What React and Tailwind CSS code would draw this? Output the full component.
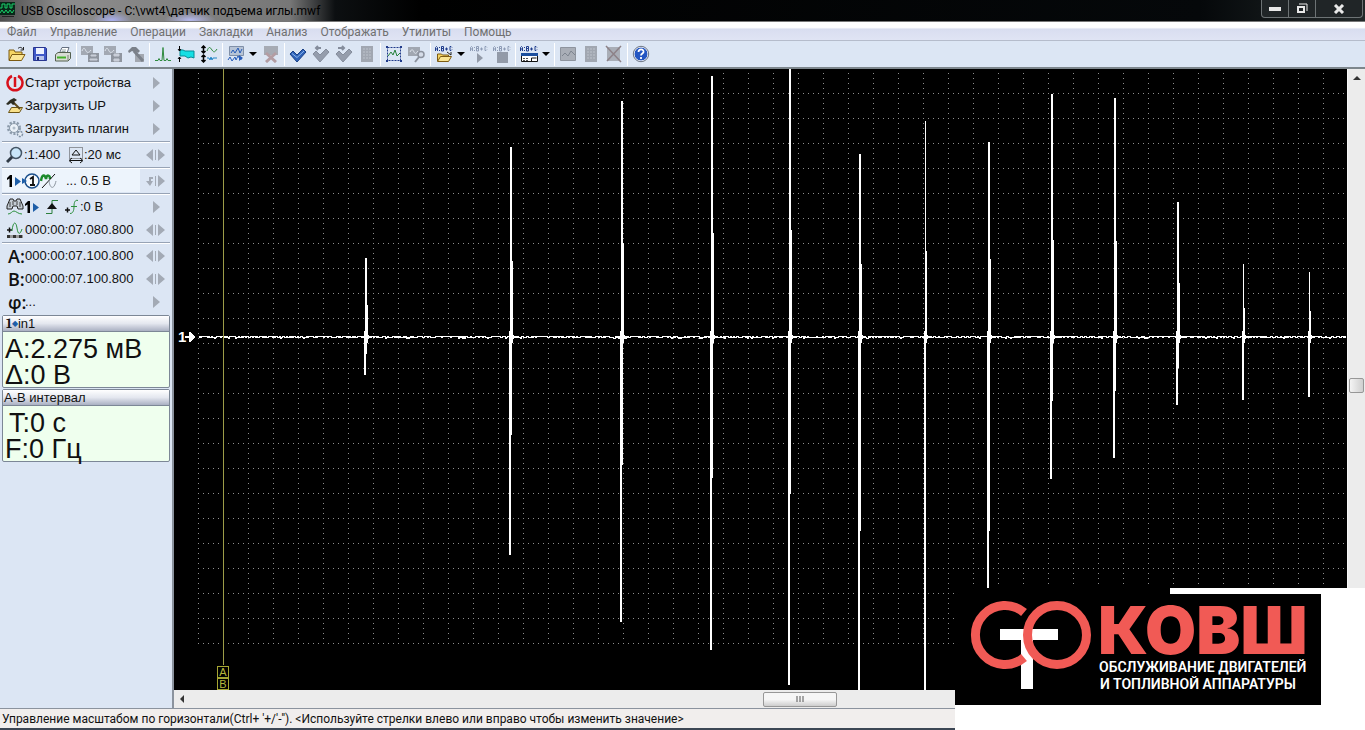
import React from "react";

const menuItems = ["Файл", "Управление", "Операции", "Закладки", "Анализ", "Отображать", "Утилиты", "Помощь"];

// x, top, bottom and line width of every pulse in the trace area
const pulses = [
  [192, 189, 306, 2],
  [337, 78, 486, 2],
  [448, 32, 553, 2],
  [538, 7, 581, 2],
  [616, 0, 616, 2],
  [686, 85, 700, 2],
  [752, 52, 700, 1],
  [815, 73, 700, 2],
  [878, 25, 410, 2],
  [941, 29, 389, 2],
  [1004, 133, 336, 2],
  [1070, 195, 331, 1],
  [1136, 203, 328, 1],
];

const BASE = 268;

const noisePath = () => {
  let d = `M24 ${BASE}`;
  let seed = 7;
  for (let x = 25; x < 1172; x += 1) {
    seed = (seed * 1103515245 + 12345) % 2147483648;
    const r = seed / 2147483648;
    const y = r > 0.45 ? BASE - 1 : r < 0.04 ? BASE + 1 : BASE;
    d += `H${x}V${y}`;
  }
  return d;
};

const Icon = ({ children, w = 18, h = 18 }) => (
  <svg width={w} height={h} viewBox={`0 0 ${w} ${h}`} fill="none" className="shrink-0" aria-hidden="true">
    {children}
  </svg>
);

const OpenIcon = () => (
  <Icon>
    <path d="M1 15V5h5l1 2h7v3" fill="#f5d563" stroke="#7d5b12" />
    <path d="M1 15.500 4 9.500h13l-3.500 6z" fill="#fbe694" stroke="#7d5b12" />
    <path d="M10 3.500c2-2 4-1 5 1M15.500 2v3h-3" stroke="#222" />
  </Icon>
);

const SaveIcon = () => (
  <Icon>
    <path d="M2.500 2.500h12l1 1v12h-13z" fill="#4059c8" stroke="#28358f" />
    <path d="M5 3h8v6H5z" fill="#eef2ff" />
    <path d="M5 11h8v4H5z" fill="#b9c4ea" />
    <path d="M6 12h2v3H6z" fill="#1e2a70" />
  </Icon>
);

const PrintIcon = () => (
  <Icon>
    <path d="M5.500 8 8 2.500h7L13 8z" fill="#fff" stroke="#657080" />
    <path d="M8 5h4M7.500 6.500h4" stroke="#9aa" />
    <path d="M1.500 9.500 4 7.500h12.500v6l-2.500 2.500H1.500z" fill="#d8ddd4" stroke="#54604f" />
    <path d="M3 12.500h9" stroke="#43b02a" strokeWidth="2" />
    <path d="M14 10v5" stroke="#7b8575" />
  </Icon>
);

const ScreensIcon = ({ disk }) => (
  <Icon>
    <path d="M0 1h12v9H0z" fill="#a3a9b3" />
    <path d="M1 6c2-5 3-2 4 0s3 2 5-1" stroke="#dfe5ee" />
    <path d="M7 8h11v9H7z" fill="#8f959f" />
    <path d={disk ? "M10 9h5v2h-5zM10 14h5v2h-5z" : "M10 10h5v1h-5zM9 14h7v1H9z"} fill="#c9ced8" stroke="#c9ced8" />
  </Icon>
);

const HammerIcon = () => (
  <Icon>
    <path d="M8 9h9v8H8z" fill="#a3a8b0" />
    <path d="M1 6 5 2h4l4 4-2 2-3-2-1 1-2-1-3 2z" fill="#7b818a" />
    <path d="m7 6 9 10" stroke="#7b818a" strokeWidth="3" />
  </Icon>
);

const PeakIcon = () => (
  <Icon>
    <path d="M1 15.500h3l1-2 1 2h2l1-13 1 13h2l1-2 1 2h3" stroke="#2f8a3e" />
  </Icon>
);

const BandIcon = () => (
  <Icon>
    <path d="M3 5h3l2 1h9v7l-3-1-3 1-3-2H3z" fill="#16dfe4" stroke="#078b95" />
    <path d="M2.500 1v5M1 4l1.500 2L4 4M2.500 12v5M1 14l1.500-2L4 14" stroke="#000" />
  </Icon>
);

const SplitIcon = () => (
  <Icon>
    <path d="M3.500 1v7M1.500 3l2-2 2 2M1.500 6l2 2 2-2M3.500 10v7M1.500 12l2-2 2 2M1.500 15l2 2 2-2" stroke="#000" strokeWidth="1.500" />
    <path d="M7 6c2-5 3-4 5-1s3 2 5-1" stroke="#2f8a3e" />
    <path d="M7 13h2l1 2 1-3 1 3 1-2h4" stroke="#2386c8" />
  </Icon>
);

const CompareIcon = () => (
  <Icon>
    <path d="M2.500 1.500h14v9h-14z" fill="#b7c4d6" stroke="#8090a8" />
    <path d="m4 8 2-3 2 3 3-5 2 5 2-4" stroke="#255bb8" />
    <path d="m1 15 2-3 2 4 3-4 1 3 2-4 2 3h2" stroke="#255bb8" />
    <path d="m12 10 4 3-4 3z" fill="#255bb8" />
  </Icon>
);

const NoScreenIcon = () => (
  <Icon>
    <path d="M2 1h14v9H2z" fill="#a6abb4" />
    <path d="m4 8 10 9M14 8 4 17" stroke="#b39da3" strokeWidth="3" />
  </Icon>
);

const CheckIcon = ({ off, dir }) => (
  <Icon>
    <path d="m1 9 3-3 4 4 6-6 3 3-9 10z" fill={off ? "#959dac" : "#2e62b8"} stroke={off ? "#858d9c" : "#183f86"} />
    {!off && <path d="m3 8.500 5 4 7-6.500" stroke="#8db7ee" />}
    {dir && <path d={dir === "left" ? "M9 3H4m2-2L4 3l2 2" : "M3 3h6M7 1l2 2-2 2"} stroke="#858d9c" strokeWidth="2" />}
  </Icon>
);

const SheetIcon = () => (
  <Icon>
    <path d="M3 1h12v16H3z" fill="#a1a7b1" />
    <path d="M5 4h8M5 7h8M5 10h8M5 13h8" stroke="#bdc3cc" strokeDasharray="2 1" />
  </Icon>
);

const SelectIcon = () => (
  <Icon>
    <path d="M2.500 2.500h13v13h-13z" stroke="#203b8a" strokeDasharray="2 1" />
    <path d="M1 1h2v2H1zM15 1h2v2h-2zM1 15h2v2H1zM15 15h2v2h-2z" fill="#203b8a" />
    <path d="m3 11 3-4 2 3 2-5 2 6 3-3" stroke="#26823a" />
  </Icon>
);

const SearchScreenIcon = () => (
  <Icon>
    <path d="M0 2h12v9H0z" fill="#a1a7b1" />
    <path d="M2 7c2-4 3-2 4 0s2 2 4-1" stroke="#dfe5ee" />
    <circle cx="13" cy="9.500" r="3" stroke="#8c929e" strokeWidth="1.500" fill="#d5dce8" />
    <path d="m11 12-4 5" stroke="#8c929e" strokeWidth="2" />
  </Icon>
);

// formula caption shared by the script buttons
const Formula = ({ off }) => (
  <path
    d="M.5 6V2.500l1-1 1 1V6M.5 4h2M4.500 2v1M4.500 5v1M6.500 6V1.500h2v2h-2m0 0h2V6h-2M10 4h3M11.500 2.500v3M17 2.500l-1-1h-1v4h1l1-1"
    stroke={off ? "#8d9bb5" : "#1f3c8c"}
  />
);

const ScriptOpenIcon = () => (
  <Icon>
    <Formula />
    <path d="M2.500 16V9h4l1 1h6v2" fill="#f5d563" stroke="#7d5b12" />
    <path d="m2.500 16.500 3-5h11l-3 5z" fill="#fbe694" stroke="#7d5b12" />
    <path d="m12 7 4 3V7" stroke="#222" />
  </Icon>
);

const ScriptRunIcon = () => (
  <Icon>
    <Formula off />
    <path d="m7 8 6 5-6 5z" fill="#929aa8" />
  </Icon>
);

const ScriptStopIcon = () => (
  <Icon>
    <Formula off />
    <path d="M4 7h11v11H4z" fill="#929aa8" />
  </Icon>
);

const ScriptPanelIcon = () => (
  <Icon>
    <Formula />
    <path d="M1.500 8.500h16v8h-16z" fill="#fff" stroke="#111" />
    <path d="M1 8h17v3H1z" fill="#1c4f9e" />
    <path d="M3 13.500h6M3 15.500h6" stroke="#555" strokeDasharray="2 1" />
    <path d="M11.500 16v-3h5" stroke="#111" />
  </Icon>
);

const WaveScreenIcon = () => (
  <Icon>
    <path d="M1.500 2.500h15v13h-15z" fill="#a9aeb7" stroke="#8e949e" />
    <path d="m3 11 3-3 3 3 3-5 4 4" stroke="#7d848f" />
  </Icon>
);

const CrossScreenIcon = () => (
  <Icon>
    <path d="M2 2h13v14H2z" fill="#a9aeb7" />
    <path d="m1 1 15 16M16 1 2 16" stroke="#8d8288" strokeWidth="1.500" />
  </Icon>
);

const HelpIcon = () => (
  <Icon>
    <circle cx="9" cy="9" r="7" fill="#2456c2" stroke="#fff" />
    <circle cx="9" cy="9" r="7.700" stroke="#6d7685" />
    <path d="M6.500 7c0-3.500 5.500-3.500 5 0-.3 1.500-2.500 1.500-2.500 3.500M9 12v2" stroke="#fff" strokeWidth="1.800" />
  </Icon>
);

const toolbar = [
  [
    { label: "Открыть", icon: <OpenIcon /> },
    { label: "Сохранить", icon: <SaveIcon /> },
    { label: "Печать", icon: <PrintIcon /> },
  ],
  [
    { label: "Копировать экран", icon: <ScreensIcon /> },
    { label: "Сохранить экран", icon: <ScreensIcon disk /> },
    { label: "Инструменты", icon: <HammerIcon /> },
  ],
  [
    { label: "Пик", icon: <PeakIcon /> },
    { label: "Полоса", icon: <BandIcon /> },
    { label: "Разделить", icon: <SplitIcon /> },
  ],
  [
    { label: "Сравнить", icon: <CompareIcon />, drop: true },
    { label: "Убрать сравнение", icon: <NoScreenIcon /> },
  ],
  [
    { label: "Закладка", icon: <CheckIcon /> },
    { label: "Предыдущая", icon: <CheckIcon off dir="left" /> },
    { label: "Следующая", icon: <CheckIcon off dir="right" /> },
    { label: "Список", icon: <SheetIcon /> },
  ],
  [
    { label: "Выделить", icon: <SelectIcon /> },
    { label: "Найти", icon: <SearchScreenIcon /> },
  ],
  [
    { label: "Открыть скрипт", icon: <ScriptOpenIcon />, drop: true },
    { label: "Запустить", icon: <ScriptRunIcon /> },
    { label: "Остановить", icon: <ScriptStopIcon /> },
  ],
  [{ label: "Панель", icon: <ScriptPanelIcon />, drop: true }],
  [
    { label: "График", icon: <WaveScreenIcon /> },
    { label: "Отчёт", icon: <SheetIcon /> },
    { label: "Закрыть", icon: <CrossScreenIcon /> },
  ],
  [{ label: "Помощь", icon: <HelpIcon /> }],
];

const PowerIcon = () => (
  <Icon>
    <path d="M6 2a7.500 7.500 0 1 0 6 0" stroke="#d8101c" strokeWidth="2.500" />
    <path d="M9 3v10" stroke="#d8101c" strokeWidth="2.500" />
  </Icon>
);

const LoadIcon = () => (
  <Icon>
    <path d="m2.500 15.500 3-5h11l-3 5z" fill="#f8e08a" stroke="#6c5414" />
    <path d="m7 5 7 7" stroke="#5d4a1c" strokeWidth="2" />
    <path d="m0 7 4-4 4-2 3 2-3 2 1 2-2 1-2-2-3 2z" fill="#2d2d22" />
  </Icon>
);

const GearIcon = () => (
  <Icon>
    <circle cx="8" cy="8" r="5.500" stroke="#8c9bab" strokeWidth="3" strokeDasharray="2 1.500" />
    <circle cx="8" cy="8" r="4.500" fill="#eaf1f8" stroke="#8c9bab" />
    <circle cx="8" cy="8" r="1.500" fill="#b0bdca" />
    <circle cx="14" cy="14" r="2.500" fill="#e6edf5" stroke="#7f90a3" strokeWidth="1.500" strokeDasharray="2 1" />
  </Icon>
);

const ZoomIcon = () => (
  <Icon>
    <circle cx="10" cy="7" r="5.500" fill="#c9e6fa" stroke="#445565" strokeWidth="1.500" />
    <path d="m6 11-5 5" stroke="#2f3a46" strokeWidth="3" />
  </Icon>
);

const TimeIcon = () => (
  <Icon w={16}>
    <path d="M1.500 1.500h13v11h-13z" stroke="#444" strokeDasharray="1 1" />
    <path d="m8 4 4 5H4zM2 14.500h12M4 12l-3 2.500L4 17M12 12l3 2.500-3 2.500" stroke="#111" />
  </Icon>
);

const OneIcon = () => (
  <Icon w={16}>
    <path d="M1 6 4 3h2v12H3.500V6.500L1 8z" fill="#000" />
    <path d="m9 5 6 4.500L9 14z" fill="#1e5ea8" />
  </Icon>
);

const CircleOneIcon = () => (
  <Icon>
    <circle cx="10" cy="9" r="7" fill="#f6fafe" stroke="#1b4f8c" strokeWidth="1.500" />
    <path d="m8 7 3-2v8M8 13h5" stroke="#111" strokeWidth="1.800" />
    <path d="m0 6 5 3-5 3z" fill="#1e5ea8" />
  </Icon>
);

const SineIcon = () => (
  <Icon>
    <path d="M1 9c1-7 4-7 5-2 1-5 4-4 4 0" stroke="#1c8a2c" strokeWidth="2.500" />
    <path d="m2 16 13-14" stroke="#111" />
    <path d="M9 9c1 8 5 9 7 0" stroke="#8b949e" />
  </Icon>
);

const FindIcon = () => (
  <Icon>
    <path d="M4 1h3l1 2h2l1-2h3l3 7v3h-5l-1-3H7l-1 3H1V8z" fill="#c4ccd4" stroke="#222" />
    <path d="M4 4v5M14 4v5M7 3v4M11 3v4" stroke="#444" />
    <path d="M2 16c3 0 4-3 6-3s4 3 8 3" stroke="#2b8f3c" />
  </Icon>
);

const EdgeIcon = () => (
  <Icon w={16}>
    <path d="M2 15.500h6v-13h6" stroke="#2b7f3c" />
    <path d="m8 5 5 6H3z" fill="#111" />
  </Icon>
);

const LevelIcon = () => (
  <Icon w={16}>
    <path d="M1 12h5M3.500 9.500v5" stroke="#111" strokeWidth="1.500" />
    <path d="M14 2.500c-3-1-4 2-4 6s-1 7-4 7M7 8.500h6" stroke="#2b8f3c" />
  </Icon>
);

const PositionIcon = () => (
  <Icon>
    <path d="M1 9h5M3.500 6.500v5" stroke="#111" strokeWidth="1.500" />
    <path d="M6 10c1-10 4-10 5-3s3 7 5 1" stroke="#2b8f3c" />
    <path d="M1 15.500h16" stroke="#999" strokeWidth="3" />
    <path d="M1 15.500h16" stroke="#333" strokeWidth="3" strokeDasharray="3 3" />
  </Icon>
);

const Arrows = ({ kind }) => (
  <svg width="20" height="14" viewBox="0 0 20 14" className="ml-auto shrink-0" fill="#a3aab5" aria-hidden="true">
    {kind === "one" && <path d="m7 1 7 6-7 6z" />}
    {kind === "both" && <path d="M7 1v12L0 7zM9 2h1v10H9zM12 1v12l7-6z" />}
    {kind === "step" && <path d="M7 3H3v4H0l4 5 3-5H5V5h2zM9 2h1v10H9zM12 1v12l7-6z" />}
  </svg>
);

const Row = ({ kind = "both", active, children }) => (
  <button
    className={
      active
        ? "flex h-[23px] w-full items-center bg-[linear-gradient(90deg,#edf4fc_138px,transparent_138px)] pr-1 pl-1 text-left"
        : "flex h-[23px] w-full items-center pr-1 pl-1 text-left"
    }
  >
    {children}
    <Arrows kind={kind} />
  </button>
);

const Divider = () => <div className="h-[3px] border-b border-white bg-[linear-gradient(#dce6f4_1px,#97a3b5_1px)]" />;

const Letter = ({ children }) => (
  <span className="w-[19px] pl-[2px] font-['Open_Sans',sans-serif] text-lg leading-none font-semibold whitespace-nowrap">
    {children}
  </span>
);

const Panel = ({ title, children }) => (
  <section className="rounded-xs border border-[#7c8796] bg-[#efffee]">
    <h2 className="flex h-4 items-center border-b border-[#7c8796] bg-linear-to-b from-white via-[#e4e7ef] to-[#aab0c2] px-px text-[13px]">
      {title}
    </h2>
    <div className="h-[55px] px-[2px] pt-1 text-[27px] leading-[26px]">{children}</div>
  </section>
);

const Sidebar = () => (
  <aside className="w-[174px] shrink-0 border-r-2 border-[#8b939e] bg-[#dce6f4] px-[2px] pt-[2px] text-[13px] text-[#111]">
    <Row kind="one"><PowerIcon /><span className="ml-px">Старт устройства</span></Row>
    <Row kind="one"><LoadIcon /><span className="ml-px">Загрузить UP</span></Row>
    <Row kind="one"><GearIcon /><span className="ml-px">Загрузить плагин</span></Row>
    <Divider />
    <Row><ZoomIcon /><span className="w-11">:1:400</span><TimeIcon /><span>:20 мс</span></Row>
    <Divider />
    <Row kind="step" active><OneIcon /><CircleOneIcon /><SineIcon /><span className="ml-2">... 0.5 В</span></Row>
    <Divider />
    <Row kind="one">
      <FindIcon /><OneIcon /><span className="mx-1"><EdgeIcon /></span><LevelIcon /><span>:0 В</span>
    </Row>
    <Row><PositionIcon /><span className="ml-px">000:00:07.080.800</span></Row>
    <Divider />
    <Row><Letter>A:</Letter><span>000:00:07.100.800</span></Row>
    <Row><Letter>B:</Letter><span>000:00:07.100.800</span></Row>
    <Row kind="one"><Letter>φ:</Letter><span>...</span></Row>
    <div className="flex flex-col gap-px pt-[2px]">
      <Panel title={<><span className="ml-[2px] font-serif font-bold">1</span><span className="text-[8px] text-[#1e5ea8]">◆</span>in1</>}>
        <p>A:2.275 мВ</p>
        <p>Δ:0 В</p>
      </Panel>
      <Panel title="A-B интервал">
        <p className="pl-1">T:0 с</p>
        <p>F:0 Гц</p>
      </Panel>
    </div>
  </aside>
);

const Trace = () => (
  <svg className="block h-full w-full bg-black" shapeRendering="crispEdges">
    <defs>
      <pattern id="rowDots" x="24" y="24" width="5" height="25" patternUnits="userSpaceOnUse">
        <rect width="1" height="1" fill="#8f8f8f" />
      </pattern>
      <pattern id="colDots" x="24" y="4" width="25" height="5" patternUnits="userSpaceOnUse">
        <rect width="1" height="1" fill="#8f8f8f" />
      </pattern>
    </defs>
    <rect x="24" y="24" width="1146" height="551" fill="url(#rowDots)" />
    <rect x="24" y="4" width="1146" height="571" fill="url(#colDots)" />

    <path d={noisePath()} transform="translate(.5 .5)" stroke="#fff" fill="none" />
    {pulses.map(([x, top, bottom, w]) => (
      <g key={x} fill="#fff">
        <rect x={x - 1} y={top} width={w} height={BASE - top} />
        <rect x={x} y={top + Math.round((BASE - top) * 0.6)} width={w} height={Math.round((BASE - top) * 0.4)} />
        <rect x={x - 2} y={BASE} width="2" height={bottom - BASE} />
        <rect x={x - 1} y={BASE} width={w} height={Math.round((bottom - BASE) * 0.45)} />
        <path d={`M${x - 2} ${BASE - 6}h${w + 1}v4h2v1h3v2h-3v1h-1v4h-1v5h-${w}z`} />
      </g>
    ))}

    {/* input marker */}
    <path d="M11 267h4v-4h1l5 5-5 5h-1v-4h-4z" fill="#fff" />
    <text x="4" y="273" fill="#fff" fontSize="15" fontWeight="bold">1</text>

    {/* A / B cursors */}
    <path d="M49.500 0v596" stroke="#9c9c48" />
    <g fill="none" stroke="#a6a632">
      <rect x="43.500" y="597.500" width="11" height="11" />
      <rect x="43.500" y="609.500" width="11" height="11" />
    </g>
    <g fill="#b5b53a" fontSize="11" textAnchor="middle">
      <text x="49" y="607">A</text>
      <text x="49" y="619">B</text>
    </g>
  </svg>
);

const Logo = () => (
  <div className="absolute right-0 bottom-0 h-[142px] w-[410px] bg-white">
    <div className="h-[6px] w-[215px] bg-black" />
    <svg width="366" height="111" viewBox="0 6 366 111" className="bg-black" aria-label="Ковш">
      <path d="M45 41h58v11H45z" fill="#fff" />
      <path d="M66 50h12v51H66z" fill="#fff" />
      <path d="M69 24.500a29.500 29.500 0 1 0 0 45" fill="none" stroke="#f15a55" strokeWidth="9" />
      <circle cx="102" cy="47" r="29.500" fill="none" stroke="#f15a55" strokeWidth="9" />
      <text x="143" y="66" fontFamily="Inter, sans-serif" fontSize="66" fontWeight="900" fill="#f15a55">КОВШ</text>
      <g fontFamily="Roboto, sans-serif" fontSize="14" fontWeight="600" fill="#fff">
        <text x="144" y="84">ОБСЛУЖИВАНИЕ ДВИГАТЕЛЕЙ</text>
        <text x="145" y="101">И ТОПЛИВНОЙ АППАРАТУРЫ</text>
      </g>
    </svg>
  </div>
);

const App = () => {
  return (
    <div className="relative flex h-screen flex-col overflow-hidden bg-[#dce6f4] font-['Liberation_Sans',Arial,sans-serif]">
      <header className="flex h-[22px] shrink-0 items-start border-b border-[#777] bg-[radial-gradient(ellipse_20px_8px_at_112px_20px,#aab0f0,transparent),radial-gradient(ellipse_26px_8px_at_190px_20px,#b5b9ee,transparent),linear-gradient(90deg,#4c4c4c,#8d8d8d_60px,#777_290px,#0c0f11_335px,#000_420px,#05080a_1200px,#222829)]">
        <svg width="16" height="18" viewBox="0 0 16 18" className="shrink-0" fill="none" aria-hidden="true">
          <path d="M0 2h15v13H0z" fill="#082818" />
          <path d="M0 8h2V4h3v4h2V4h3v4h2V4h3M0 13l2-3 2 3 2-3 2 3 2-3 2 3 2-3" stroke="#19d26a" />
          <path d="M2 16.500h12" stroke="#222" />
        </svg>
        <h1 className="ml-[5px] font-[Roboto,sans-serif] text-xs leading-[22px] text-black">
          USB Oscilloscope - C:\vwt4\датчик подъема иглы.mwf
        </h1>
        <div className="mr-[2px] ml-auto flex h-[18px] rounded-b-sm border border-t-0 border-[#6d7375] bg-[#202527]">
          <button aria-label="Свернуть" className="flex w-[27px] items-center justify-center border-r border-[#6d7375]">
            <svg width="12" height="4" aria-hidden="true"><path d="M0 0h12v4H0z" fill="#e8e8e8" /></svg>
          </button>
          <button aria-label="Развернуть" className="flex w-[27px] items-center justify-center border-r border-[#6d7375]">
            <svg width="12" height="11" fill="none" aria-hidden="true">
              <path d="M3 1h8v7" stroke="#e8e8e8" />
              <path d="M2 4h6v5H2z" stroke="#e8e8e8" strokeWidth="2" />
            </svg>
          </button>
          <button aria-label="Закрыть" className="flex w-[46px] items-center justify-center">
            <svg width="12" height="10" aria-hidden="true"><path d="m2 1 8 8m0-8L2 9" stroke="#e8e8e8" strokeWidth="3" /></svg>
          </button>
        </div>
      </header>

      <nav className="flex h-[19px] shrink-0 items-center gap-[13px] border-b border-[#b5bccb] bg-linear-to-b from-white from-30% via-[#d9def0] via-40% to-[#e0e4f4] pt-px pl-[7px] font-[Roboto,sans-serif] text-xs text-[#707070]">
        {menuItems.map((item) => (
          <a key={item} href="#">{item}</a>
        ))}
      </nav>

      <div className="flex h-7 shrink-0 items-center border-b-2 border-[#7d868c] bg-[#dce6f4] pl-[5px]">
        {toolbar.map((group, i) => (
          <div key={i} className="flex h-full items-center">
            {i > 0 && <span className="mr-px ml-[2px] h-[23px] w-px bg-white" />}
            {group.map((tool) => (
              <React.Fragment key={tool.label}>
                <button aria-label={tool.label} className="flex h-6 w-[23px] items-center justify-center">
                  {tool.icon}
                </button>
                {tool.drop && (
                  <button aria-label={`${tool.label}: меню`} className="flex h-6 w-3 items-center justify-center">
                    <svg width="8" height="4" aria-hidden="true"><path d="M0 0h8L4 4z" fill="#000" /></svg>
                  </button>
                )}
              </React.Fragment>
            ))}
          </div>
        ))}
      </div>

      <main className="flex min-h-0 flex-1">
        <Sidebar />
        <div className="flex min-w-0 flex-1 flex-col">
          <div className="flex min-h-0 flex-1">
            <div className="min-w-0 flex-1">
              <Trace />
            </div>
            <div className="flex w-[18px] flex-col items-center border-l border-[#f8f8f8] bg-[#ececec]">
              <svg width="8" height="4" className="mt-[7px]" aria-hidden="true"><path d="m0 4 4-4 4 4z" fill="#333" /></svg>
              <div className="mt-[298px] h-[15px] w-[15px] rounded-xs border border-[#979797] bg-linear-to-r from-[#f4f4f4] to-[#cfcfcf]" />
            </div>
          </div>
          <div className="flex h-[18px] items-center bg-[#ececec]">
            <svg width="4" height="8" className="ml-[6px]" aria-hidden="true"><path d="M4 0v8L0 4z" fill="#333" /></svg>
            <div className="ml-[579px] flex h-[15px] w-[74px] items-center justify-center rounded-xs border border-[#979797] bg-linear-to-b from-[#f6f6f6] from-50% to-[#cdcdcd]">
              <svg width="8" height="6" aria-hidden="true"><path d="M1 0v6M4 0v6M7 0v6" stroke="#555" /></svg>
            </div>
          </div>
        </div>
      </main>

      <footer className="h-[22px] shrink-0 border-t border-b-2 border-t-[#8b939e] border-b-[#3c4654] bg-[#f1eeed] pl-[2px] font-[Roboto,sans-serif] text-xs leading-[21px] text-[#111]">
        Управление масштабом по горизонтали(Ctrl+ '+/'-''). &lt;Используйте стрелки влево или вправо чтобы изменить значение&gt;
      </footer>

      <Logo />
    </div>
  );
};

export default App;
